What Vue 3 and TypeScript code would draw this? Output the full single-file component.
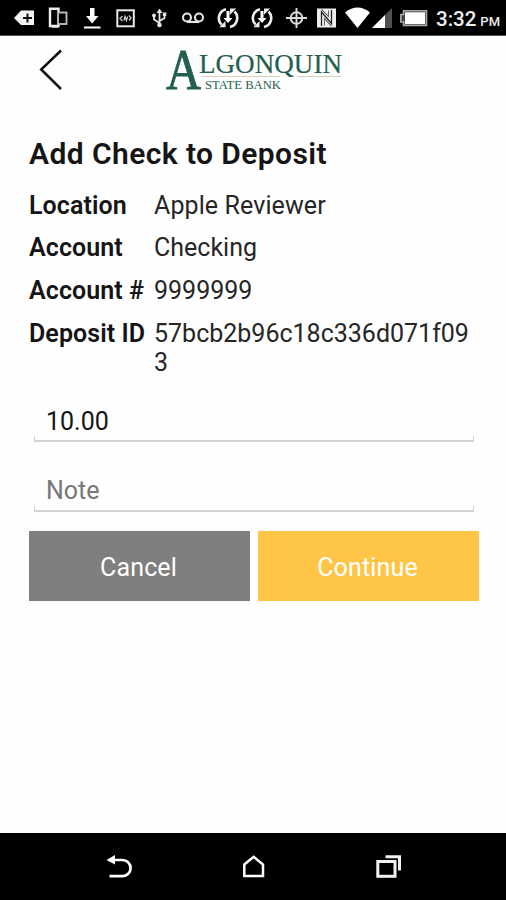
<script setup lang="ts">
import { ref } from 'vue'

interface Detail {
  label: string
  value: string
}

const details: Detail[] = [
  { label: 'Location', value: 'Apple Reviewer' },
  { label: 'Account', value: 'Checking' },
  { label: 'Account #', value: '9999999' },
  { label: 'Deposit ID', value: '57bcb2b96c18c336d071f093' },
]

const amount = ref('10.00')
const note = ref('')
</script>

<template>
  <div class="screen">
    <header class="status">
      <!-- backspace-style tag -->
      <svg width="38" height="35" viewBox="4 0 38 35"><path d="M14 18 21 10.5H34V25H21Z" fill="#f4f4f4" /><path d="M27.500 13.500v9M23 18h9" stroke="#111" stroke-width="2" /></svg>
      <!-- devices -->
      <svg width="34" height="35" viewBox="42 0 34 35" fill="none"><path d="M58.500 12V8.800H50V26H58.500V24" stroke="#eee" stroke-width="2.400" /><path d="M52 26.500h6" stroke="#eee" stroke-width="2.500" /><rect x="58" y="12.500" width="8.500" height="11.500" stroke="#bbb" stroke-width="1.900" /></svg>
      <!-- download -->
      <svg width="33" height="35" viewBox="76 0 33 35"><path d="M90 8h4.500v8h4L92.200 23.500 86 16h4Z" fill="#fff" /><path d="M84 27.500h16.500" stroke="#fff" stroke-width="2" /></svg>
      <!-- code box -->
      <svg width="34" height="35" viewBox="109 0 34 35" fill="none"><rect x="117.300" y="10.300" width="16.500" height="16" stroke="#e8e8e8" stroke-width="2" /><path d="m122.500 16-2.500 2.500 2.500 2.500M129 15.500l2 2.500-2 2.500M124 20.500l1-4 1.500 4 1-4" stroke="#ccc" stroke-width="1.300" /></svg>
      <!-- usb -->
      <svg width="34" height="35" viewBox="143 0 34 35" fill="none"><path d="M159.500 12v12M159.500 23l-5.500-3.500v-4M159.500 21l5-3v-4" stroke="#e5e5e5" stroke-width="1.800" /><path d="m156.500 13 3-4.500 3 4.500Z" fill="#e5e5e5" /><circle cx="159.500" cy="25" r="2.300" fill="#e5e5e5" /><circle cx="154" cy="15.500" r="1.900" fill="#e5e5e5" /><path d="M162.800 12.500h3.500v3.500h-3.500z" fill="#e5e5e5" /></svg>
      <!-- voicemail -->
      <svg width="34" height="35" viewBox="177 0 34 35" fill="none" stroke="#e5e5e5" stroke-width="2.100"><circle cx="187" cy="17.500" r="4" /><circle cx="199" cy="17.500" r="4" /><path d="M187 22h12" /></svg>
      <!-- sync -->
      <svg v-for="n in 2" :key="n" width="34" height="35" viewBox="210.500 0 34 35" fill="none"><path d="M225.500 9.200a9.200 9.200 0 0 0-4.500 15.400M229.500 27a9.200 9.200 0 0 0 4.500-15.500" stroke="#eee" stroke-width="2.600" /><path d="M218.800 27.300h6.200v-6.200ZM235.700 8.500h-6.200v6.200Z" fill="#eee" /><path d="M226 11h3v7h3l-4.500 5-4.500-5h3Z" fill="#fff" /></svg>
      <!-- location -->
      <svg width="33" height="35" viewBox="279 0 33 35" fill="none" stroke="#ddd"><circle cx="296.500" cy="18" r="5.800" stroke-width="2" /><path d="M286 18h21M296.500 8v20" stroke-width="1.900" /></svg>
      <!-- nfc -->
      <svg width="28" height="35" viewBox="312 0 28 35" fill="none"><rect x="317" y="8.500" width="19" height="19" fill="#eee" /><path d="M321.500 26V12L331.500 23.500V10" stroke="#222" stroke-width="1.300" /><path d="M324.500 25.500v-7l7 7.500M328.500 10.500v6l-7-7" stroke="#666" stroke-width="1.100" /></svg>
      <!-- wifi -->
      <svg width="31" height="35" viewBox="340 0 31 35"><path d="M345 12.500q12.500-10 25 0L357.500 28Z" fill="#fff" /></svg>
      <!-- signal -->
      <svg width="26" height="35" viewBox="371 0 26 35"><path d="M392 8v20H372Z" fill="#505050" /><path d="M385 15v13h-13Z" fill="#fff" /></svg>
      <!-- battery -->
      <svg width="36" height="35" viewBox="397 0 36 35"><path d="M403.500 10.800H426.500V25.500H403.500V22H400.800V14.500H403.500Z" fill="#444" stroke="#aaa" stroke-width="1.600" /><rect x="405" y="12.300" width="20" height="11.800" fill="#fff" /></svg>
      <div class="clock">3:32<span>PM</span></div>
    </header>

    <div class="toolbar">
      <button class="back" aria-label="Back">
        <svg width="24" height="42" viewBox="0 0 24 42"><path d="M22 1.500 2.200 20.500 22 40" fill="none" stroke="#111" stroke-width="2.500" /></svg>
      </button>
      <svg class="logo" width="180" height="64" viewBox="164 36 180 64">
        <g font-family="Liberation Serif, serif" fill="#245e50">
          <text x="166" y="89" font-size="58" textLength="35" lengthAdjust="spacingAndGlyphs" stroke="#245e50" stroke-width=".9">A</text>
          <text x="199" y="73" font-size="27.500" textLength="143" lengthAdjust="spacingAndGlyphs" stroke="#245e50" stroke-width=".2">LGONQUIN</text>
          <text x="205" y="89" font-size="13.500" textLength="76" lengthAdjust="spacingAndGlyphs">STATE BANK</text>
        </g>
        <path d="M201 76.500h79M297 76.500h44" stroke="#d7cfb4" stroke-width="1.200" />
      </svg>
    </div>

    <main class="content">
      <h1>Add Check to Deposit</h1>
      <dl class="details">
        <template v-for="item in details" :key="item.label">
          <dt>{{ item.label }}</dt>
          <dd>{{ item.value }}</dd>
        </template>
      </dl>
      <div class="field"><input v-model="amount" aria-label="Amount" /></div>
      <div class="field note"><input v-model="note" placeholder="Note" /></div>
      <div class="actions">
        <button class="cancel">Cancel</button>
        <button class="continue">Continue</button>
      </div>
    </main>

    <nav class="navbar">
      <svg width="26" height="26" viewBox="106 854 26 26"><path d="M113 860H122.500a7.900 7.900 0 0 1 0 16.200H109.500" fill="none" stroke="#fff" stroke-width="2.700" /><path d="m106.500 860 8.500-5v9.500Z" fill="#fff" /></svg>
      <svg width="24" height="26" viewBox="242 854 24 26"><path d="M244.300 864.500 253.700 856.800 263 864.500V876H244.300Z" fill="none" stroke="#fff" stroke-width="2.500" /></svg>
      <svg width="28" height="26" viewBox="375 854 28 26" fill="none" stroke="#f2f2f2"><rect x="377.800" y="861.500" width="17.200" height="14.800" stroke-width="3" /><path d="M385.500 856.800H399.500V870.500" stroke-width="3" /></svg>
    </nav>
  </div>
</template>

<style>
body {
  margin: 0;
  background: #fefefe;
}
</style>

<style scoped>
.screen {
  display: flex;
  flex-direction: column;
  height: 900px;
  overflow: hidden;
  background: #fefefe;
  color: #151515;
  font-family: Roboto, sans-serif;
}
svg {
  display: block;
  flex: none;
}
.status {
  display: flex;
  flex: none;
  box-sizing: border-box;
  height: 36px;
  padding-left: 4px;
  background: #000;
  border-bottom: 1px solid #555;
}
.clock {
  flex: none;
  padding-left: 3px;
  color: #eee;
  font-size: 20.500px;
  font-weight: 500;
  line-height: 39px;
  white-space: nowrap;
}
.clock span {
  margin-left: 4px;
  font-size: 13px;
}
.toolbar {
  display: flex;
  flex: none;
  height: 64px;
  padding-left: 39px;
}
.back {
  padding: 13px 0 0;
  border: 0;
  background: none;
  height: 55px;
}
.logo {
  margin: 0 0 0 101px;
  overflow: visible;
}
.content {
  flex: 1;
  padding: 36px 27px 0 29px;
}
h1 {
  margin: 0;
  font-size: 30px;
  font-weight: 600;
  letter-spacing: 0.42px;
  line-height: 36px;
  white-space: nowrap;
}
.details {
  display: grid;
  grid-template-columns: 125px 317px;
  row-gap: 13.400px;
  margin: 18.800px 0 0;
  font-size: 25px;
  line-height: 29.300px;
}
dt {
  font-weight: 600;
  letter-spacing: 0.080px;
  white-space: nowrap;
}
dd {
  margin: 0;
  color: #262626;
  overflow-wrap: anywhere;
}
dd:first-of-type {
  letter-spacing: 0.1px;
}
.field {
  box-sizing: border-box;
  width: 440px;
  height: 40px;
  margin: 24.500px 0 0 5px;
  background:
    linear-gradient(#d0d0d0, #d0d0d0) 0 100% / 1px 6px no-repeat,
    linear-gradient(#d0d0d0, #d0d0d0) 100% 100% / 1px 6px no-repeat,
    linear-gradient(#d4d4d4, #d4d4d4) 0 100% / 100% 2px no-repeat;
}
.field + .field {
  margin-top: 30px;
}
.field input {
  box-sizing: border-box;
  display: block;
  width: 100%;
  height: 39px;
  padding: 1px 12px 0;
  border: 0;
  outline: 0;
  background: none;
  color: #151515;
  font: 25px Roboto, sans-serif;
}
.note input {
  height: 38px;
  padding-top: 0;
}
.field input::placeholder {
  color: #777;
  opacity: 1;
}
.actions {
  display: grid;
  grid-template-columns: 221px 221px;
  gap: 8px;
  margin: 19px 0 0 -0.500px;
}
.actions button {
  height: 70px;
  padding: 4px 1px 0 0;
  border: 0;
  color: #fff;
  font: 25px Roboto, sans-serif;
  letter-spacing: 0.15px;
}
.cancel {
  background: #7f7f7f;
}
.continue {
  background: #ffc547;
}
.navbar {
  display: flex;
  flex: none;
  box-sizing: border-box;
  height: 67px;
  padding: 21px 103px 0 106px;
  justify-content: space-between;
  background: #000;
}
</style>
